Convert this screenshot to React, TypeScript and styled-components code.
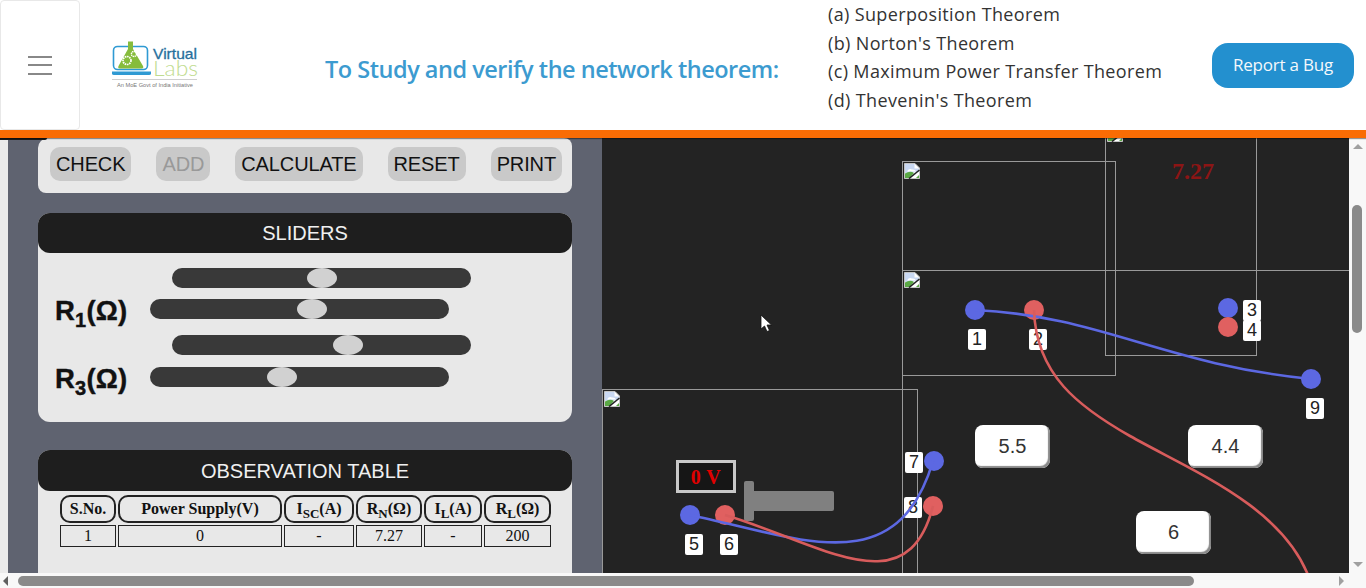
import React from "react";
import styled, { createGlobalStyle } from "styled-components";

const GlobalStyle = createGlobalStyle`
  html, body {
    margin: 0;
    padding: 0;
    overflow: hidden;
    background: #fff;
  }
  * {
    box-sizing: border-box;
  }
`;

const Screen = styled.div`
  width: 1366px;
  height: 588px;
  display: flex;
  flex-direction: column;
  overflow: hidden;
  font-family: "Liberation Sans", Arial, sans-serif;
`;

/* ---------- header ---------- */
const Header = styled.header`
  height: 130px;
  flex: none;
  display: grid;
  grid-template-columns: 80px 245px 503px 384px 142px;
  align-items: center;
  background: #fff;
  font-family: "Open Sans", sans-serif;
`;

const MenuBox = styled.div`
  height: 130px;
  border: 1px solid #e8e8e8;
  border-radius: 4px;
  display: flex;
  flex-direction: column;
  justify-content: center;
  align-items: center;
  gap: 6.5px;
`;

const MenuLine = styled.span`
  width: 24px;
  height: 2px;
  background: #888;
`;

const LogoWrap = styled.div`
  padding: 2px 0 0 32px;
  display: flex;
`;

const Title = styled.h1`
  margin: 0;
  font-size: 23.5px;
  font-weight: 600;
  letter-spacing: -0.48px;
  color: #3c9bd0;
  white-space: nowrap;
  position: relative;
  top: 4px;
`;

const TheoremList = styled.ul`
  list-style: none;
  margin: 0;
  padding: 0;
  align-self: start;
`;

const TheoremItem = styled.li`
  height: 28.5px;
  line-height: 28.5px;
  font-size: 18px;
  letter-spacing: 0.36px;
  color: #333;
  white-space: nowrap;
`;

const BugButton = styled.button`
  width: 142px;
  height: 45px;
  border: none;
  border-radius: 16px;
  background: #2390cf;
  color: #f4f8fb;
  font-family: "Open Sans", sans-serif;
  font-size: 17px;
  letter-spacing: -0.2px;
  padding: 0 0 2px;
`;

const OrangeBar = styled.div`
  height: 8px;
  flex: none;
  background: #f96c04;
  box-shadow: 0 1px 1px rgba(0, 0, 0, 0.4);
  position: relative;
  z-index: 2;
`;

/* ---------- body ---------- */
const Workspace = styled.div`
  flex: 1;
  min-height: 0;
  display: flex;
  position: relative;
`;

const ClippedEdge = styled.div`
  position: absolute;
  left: 0;
  top: 0;
  width: 47px;
  height: 2px;
  background: #1a1a1a;
  border-radius: 0 0 6px 0;
  z-index: 1;
`;

const LeftGutter = styled.div`
  width: 8px;
  flex: none;
  background: #ebebeb;
`;

const ControlPanel = styled.aside`
  width: 594px;
  flex: none;
  padding: 0 30px;
  background: #5f6370;
  overflow: hidden;
  display: flex;
  flex-direction: column;
`;

const ButtonCard = styled.div`
  flex: none;
  height: 55px;
  padding: 9px 12px 0;
  display: flex;
  gap: 25px;
  align-items: flex-start;
  background: #e8e8e8;
  border-radius: 8px;
  border-top-left-radius: 10px;
`;

const ActionButton = styled.button<{ $disabled?: boolean }>`
  height: 34px;
  padding: 0 6px;
  border: none;
  border-radius: 10px;
  background: #c9c9c9;
  font-family: "Liberation Sans", Arial, sans-serif;
  font-size: 20px;
  letter-spacing: -0.12px;
  color: ${(p) => (p.$disabled ? "#999" : "#111")};
`;

const Card = styled.section<{ $top: number; $height: number }>`
  flex: none;
  margin-top: ${(p) => p.$top}px;
  height: ${(p) => p.$height}px;
  background: #e8e8e8;
  border-radius: 12px;
`;

const CardTitle = styled.div<{ $height: number }>`
  height: ${(p) => p.$height}px;
  line-height: ${(p) => p.$height + 1}px;
  background: #1e1e1e;
  border-radius: 12px;
  text-align: center;
  color: #f0f0f0;
  font-size: 20px;
`;

const SliderList = styled.div`
  padding-top: 15px;
  display: flex;
  flex-direction: column;
`;

const SliderGroup = styled.div`
  margin-bottom: 16px;
`;

const SliderRow = styled.div<{ $gap?: number }>`
  display: flex;
  align-items: center;
  height: 20px;
  margin-top: ${(p) => p.$gap ?? 0}px;
  padding-left: ${(p) => (p.$gap ? 0 : 134)}px;
`;

const RLabel = styled.div`
  width: 112px;
  padding-left: 17px;
  font-weight: bold;
  font-size: 27.5px;
  letter-spacing: 0.2px;
  -webkit-text-stroke: 0.4px #111;
  color: #111;
  white-space: nowrap;
  position: relative;
  top: 2px;

  sub {
    font-size: 20px;
    line-height: 0;
  }
`;

const Track = styled.div`
  width: 299px;
  height: 20px;
  border-radius: 10px;
  background: #393939;
  position: relative;
`;

const Thumb = styled.span`
  position: absolute;
  top: 0;
  width: 30px;
  height: 20px;
  border-radius: 50%;
  background: #d1d1d1;
`;

const ObsTable = styled.table`
  margin: 2px 0 0 20px;
  width: 495px;
  table-layout: fixed;
  border-collapse: separate;
  border-spacing: 2px;
  font-family: "Liberation Serif", "Times New Roman", serif;
  color: #111;

  sub {
    font-size: 13px;
    line-height: 0;
  }
`;

const HeadCell = styled.th<{ $w: number }>`
  width: ${(p) => p.$w}px;
  height: 28px;
  padding: 0;
  border: 2px solid #222;
  border-radius: 10px;
  font-size: 16px;
  font-weight: bold;
`;

const BodyCell = styled.td`
  height: 22px;
  padding: 0;
  border: 1px solid #222;
  text-align: center;
  font-size: 16px;
`;

/* ---------- circuit canvas, items sit at their place on the board ---------- */
const Board = styled.main`
  flex: 1;
  min-width: 0;
  position: relative;
  overflow: hidden;
  background: #232323;
`;

const Frame = styled.div<{ $x: number; $y: number; $w: number; $h: number }>`
  position: absolute;
  left: ${(p) => p.$x}px;
  top: ${(p) => p.$y}px;
  width: ${(p) => p.$w}px;
  height: ${(p) => p.$h}px;
  border: 1px solid #999;
  padding: 1px;
`;

const WireLayer = styled.svg`
  position: absolute;
  left: 0;
  top: 0;
  width: 747px;
  height: 435px;
  z-index: 2;
`;

const Terminal = styled.span<{ $x: number; $y: number; $red?: boolean }>`
  position: absolute;
  left: ${(p) => p.$x - 10}px;
  top: ${(p) => p.$y - 10}px;
  width: 20px;
  height: 20px;
  border-radius: 50%;
  background: ${(p) => (p.$red ? "#e06060" : "#5c68e2")};
  z-index: 1;
`;

const PinLabel = styled.span<{ $x: number; $y: number }>`
  position: absolute;
  left: ${(p) => p.$x}px;
  top: ${(p) => p.$y}px;
  width: 18px;
  height: 21px;
  line-height: 21px;
  border-radius: 2px;
  background: #fff;
  text-align: center;
  font-size: 18px;
  color: #222;
  z-index: 1;
`;

const ValueBox = styled.div<{ $x: number; $y: number }>`
  position: absolute;
  left: ${(p) => p.$x}px;
  top: ${(p) => p.$y}px;
  width: 75px;
  height: 43px;
  line-height: 42px;
  border-radius: 8px;
  background: #fff;
  box-shadow: inset -2px -2px 1px #888;
  text-align: center;
  font-size: 20px;
  color: #333;
`;

const ReadOut = styled.div`
  position: absolute;
  left: 570px;
  top: 20px;
  font-family: "Liberation Serif", serif;
  font-weight: bold;
  font-size: 24px;
  color: #8c1515;
`;

const VoltMeter = styled.div`
  position: absolute;
  left: 74px;
  top: 322px;
  width: 60px;
  height: 33px;
  border: 3px solid #c8c8c8;
  background: #161616;
  text-align: center;
  line-height: 28px;
  font-family: "Liberation Serif", serif;
  font-weight: bold;
  font-size: 20px;
  letter-spacing: 0.5px;
  color: #e00000;
`;

const SourceStem = styled.div`
  position: absolute;
  left: 142px;
  top: 343px;
  width: 10px;
  height: 40px;
  border-radius: 2px;
  background: #808080;
`;

const SourceBar = styled.div`
  position: absolute;
  left: 152px;
  top: 353px;
  width: 80px;
  height: 20px;
  border-radius: 0 2px 2px 0;
  background: #808080;
`;

const Pointer = styled.svg`
  position: absolute;
  left: 158px;
  top: 176px;
  z-index: 3;
`;

/* ---------- scrollbars ---------- */
const VScroll = styled.div`
  width: 17px;
  flex: none;
  background: #f8f8f8;
  display: flex;
  flex-direction: column;
  align-items: center;
  justify-content: space-between;
  padding: 6px 0 6px;
  position: relative;
`;

const VThumb = styled.div`
  position: absolute;
  left: 3px;
  top: 67px;
  width: 10px;
  height: 128px;
  border-radius: 5px;
  background: #8a8a8a;
`;

const HScroll = styled.div`
  height: 15px;
  flex: none;
  background: #f8f8f8;
  display: flex;
  align-items: center;
  padding: 0 22px 0 3px;
`;

const HThumb = styled.div`
  margin-left: 10px;
  width: 1176px;
  height: 10px;
  border-radius: 5px;
  background: #8a8a8a;
`;

const Arrow = styled.svg`
  display: block;
  flex: none;
`;

const HGap = styled.div`
  flex: 1;
`;

const BrokenImage = () => (
  <svg width="16" height="16" viewBox="0 0 16 16">
    <path d="M0.5 0.5H11L15.5 5V15.5H0.5Z" fill="#fff" stroke="#c4c4c4" />
    <path d="M1 1H10.5V5.5H15V9L1 10Z" fill="#c9d8f2" />
    <path d="M3 8.5Q5 5 8 6.5Q11 6 12 8.5Z" fill="#fff" />
    <path d="M1 15V10.5Q6 7.5 10 10L5.5 15Z" fill="#5aa845" />
    <path d="M12 15L15 12V15Z" fill="#5aa845" />
    <path d="M5 15.5L15.5 7" stroke="#222" strokeWidth="1.6" />
  </svg>
);

const VirtualLabsLogo = () => (
  <svg width="88" height="50" viewBox="0 0 88 50">
    <rect x="1.5" y="5.5" width="34" height="23" rx="4" fill="none" stroke="#2f9ad3" strokeWidth="1.6" />
    <path d="M0 30.5H39V32.5Q39 34 37 34H2Q0 34 0 32.5Z" fill="#2f9ad3" />
    <path d="M16 0.5H21V8L31 25Q32 27.5 29.5 27.5H8Q5.5 27.5 6.5 25L16 8Z" fill="#86bc3c" />
    <circle cx="15" cy="19.5" r="4" fill="none" stroke="#fff" strokeWidth="1.7" strokeDasharray="1.6 0.7" />
    <circle cx="22" cy="13" r="2.6" fill="none" stroke="#fff" strokeWidth="1.4" strokeDasharray="1.4 0.6" />
    <text x="41" y="18" fontFamily="Liberation Sans, sans-serif" fontSize="15" stroke="#27709c" strokeWidth="0.3" fill="#27709c" textLength="44" lengthAdjust="spacingAndGlyphs">Virtual</text>
    <text x="41" y="35" fontFamily="Lato, sans-serif" fontWeight="300" fontSize="21" fill="#bfdc90" textLength="45" lengthAdjust="spacingAndGlyphs">Labs</text>
    <rect x="0" y="38" width="85" height="1" fill="#cfcfcf" />
    <text x="5" y="45.5" fontFamily="Liberation Sans, sans-serif" fontSize="5.4" fill="#777" textLength="76" lengthAdjust="spacingAndGlyphs">An MoE Govt of India Initiative</text>
  </svg>
);

const sliders = [
  { label: "1", top: 150, bottom: 162, gap: 11 },
  { label: "3", top: 176, bottom: 132, gap: 12 },
];

const theorems = [
  "(a) Superposition Theorem",
  "(b) Norton's Theorem",
  "(c) Maximum Power Transfer Theorem",
  "(d) Thevenin's Theorem",
];

const pins = [
  { n: "1", x: 366, y: 191 },
  { n: "3", x: 641, y: 162 },
  { n: "4", x: 641, y: 182 },
  { n: "9", x: 704, y: 260 },
  { n: "5", x: 83, y: 396 },
  { n: "6", x: 118, y: 396 },
  { n: "7", x: 303, y: 314 },
  { n: "8", x: 302, y: 359 },
];

const terminals = [
  { x: 373, y: 172 },
  { x: 432, y: 172, red: true },
  { x: 626, y: 170 },
  { x: 626, y: 189, red: true },
  { x: 709, y: 241 },
  { x: 88, y: 377 },
  { x: 123, y: 377, red: true },
  { x: 332, y: 323 },
  { x: 331, y: 368, red: true },
];

export default function App() {
  return (
    <Screen>
      <GlobalStyle />
      <Header>
        <MenuBox>
          <MenuLine />
          <MenuLine />
          <MenuLine />
        </MenuBox>
        <LogoWrap>
          <VirtualLabsLogo />
        </LogoWrap>
        <Title>To Study and verify the network theorem:</Title>
        <TheoremList>
          {theorems.map((t) => (
            <TheoremItem key={t}>{t}</TheoremItem>
          ))}
        </TheoremList>
        <BugButton>Report a Bug</BugButton>
      </Header>
      <OrangeBar />
      <Workspace>
        <ClippedEdge />
        <LeftGutter />
        <ControlPanel>
          <ButtonCard>
            <ActionButton>CHECK</ActionButton>
            <ActionButton $disabled>ADD</ActionButton>
            <ActionButton>CALCULATE</ActionButton>
            <ActionButton>RESET</ActionButton>
            <ActionButton>PRINT</ActionButton>
          </ButtonCard>

          <Card $top={20} $height={209}>
            <CardTitle $height={40}>SLIDERS</CardTitle>
            <SliderList>
              {sliders.map((s) => (
                <SliderGroup key={s.label}>
                  <SliderRow>
                    <Track>
                      <Thumb style={{ left: s.top - 15 }} />
                    </Track>
                  </SliderRow>
                  <SliderRow $gap={s.gap}>
                    <RLabel>
                      R<sub>{s.label}</sub>(Ω)
                    </RLabel>
                    <Track>
                      <Thumb style={{ left: s.bottom - 15 }} />
                    </Track>
                  </SliderRow>
                </SliderGroup>
              ))}
            </SliderList>
          </Card>

          <Card $top={28} $height={200}>
            <CardTitle $height={41}>OBSERVATION TABLE</CardTitle>
            <ObsTable>
              <thead>
                <tr>
                  <HeadCell $w={56}>S.No.</HeadCell>
                  <HeadCell $w={164}>Power Supply(V)</HeadCell>
                  <HeadCell $w={70}>
                    I<sub>SC</sub>(A)
                  </HeadCell>
                  <HeadCell $w={66}>
                    R<sub>N</sub>(Ω)
                  </HeadCell>
                  <HeadCell $w={58}>
                    I<sub>L</sub>(A)
                  </HeadCell>
                  <HeadCell $w={67}>
                    R<sub>L</sub>(Ω)
                  </HeadCell>
                </tr>
              </thead>
              <tbody>
                <tr>
                  <BodyCell>1</BodyCell>
                  <BodyCell>0</BodyCell>
                  <BodyCell>-</BodyCell>
                  <BodyCell>7.27</BodyCell>
                  <BodyCell>-</BodyCell>
                  <BodyCell>200</BodyCell>
                </tr>
              </tbody>
            </ObsTable>
          </Card>
        </ControlPanel>

        <Board>
          <Frame $x={300} $y={23} $w={214} $h={215}>
            <BrokenImage />
          </Frame>
          <Frame $x={300} $y={132} $w={500} $h={400}>
            <BrokenImage />
          </Frame>
          <Frame $x={503} $y={-14} $w={152} $h={232}>
            <BrokenImage />
          </Frame>
          <Frame $x={0} $y={251} $w={316} $h={300}>
            <BrokenImage />
          </Frame>

          <ReadOut>7.27</ReadOut>

          {pins.map((p) => (
            <PinLabel key={p.n} $x={p.x} $y={p.y}>
              {p.n}
            </PinLabel>
          ))}
          <PinLabel $x={427} $y={191}>
            2
          </PinLabel>
          {terminals.map((t) => (
            <Terminal key={`${t.x}-${t.y}`} $x={t.x} $y={t.y} $red={t.red} />
          ))}

          <VoltMeter>0 V</VoltMeter>
          <SourceStem />
          <SourceBar />

          <ValueBox $x={373} $y={287}>
            5.5
          </ValueBox>
          <ValueBox $x={586} $y={287}>
            4.4
          </ValueBox>
          <ValueBox $x={534} $y={373}>
            6
          </ValueBox>

          <WireLayer viewBox="0 0 747 435">
            <g fill="none" strokeWidth="2.6">
              <path d="M373 172C500 178 560 226 709 241" stroke="#5c68e2" />
              <path d="M432 172C434 237 477 269 528 298C588 332 678 367 706 437" stroke="#d85c5c" />
              <path d="M88 377C198 400 295 445 331 323" stroke="#5c68e2" />
              <path d="M123 377C218 405 305 470 331 368" stroke="#d85c5c" />
            </g>
          </WireLayer>

          <Pointer width="13" height="19" viewBox="0 0 13 19">
            <path d="M1 1V15L4.5 12L7 17.5L9.5 16.5L7 11H11.5Z" fill="#fff" stroke="#111" strokeWidth="0.8" />
          </Pointer>
        </Board>

        <VScroll>
          <Arrow width="10" height="5" viewBox="0 0 10 5">
            <path d="M5 0L10 5H0Z" fill="#a0a0a0" />
          </Arrow>
          <VThumb />
          <Arrow width="10" height="5" viewBox="0 0 10 5">
            <path d="M0 0H10L5 5Z" fill="#a0a0a0" />
          </Arrow>
        </VScroll>
      </Workspace>
      <HScroll>
        <Arrow width="5" height="10" viewBox="0 0 5 10">
          <path d="M5 0V10L0 5Z" fill="#606060" />
        </Arrow>
        <HThumb />
        <HGap />
        <Arrow width="5" height="10" viewBox="0 0 5 10">
          <path d="M0 0L5 5L0 10Z" fill="#a0a0a0" />
        </Arrow>
      </HScroll>
    </Screen>
  );
}
